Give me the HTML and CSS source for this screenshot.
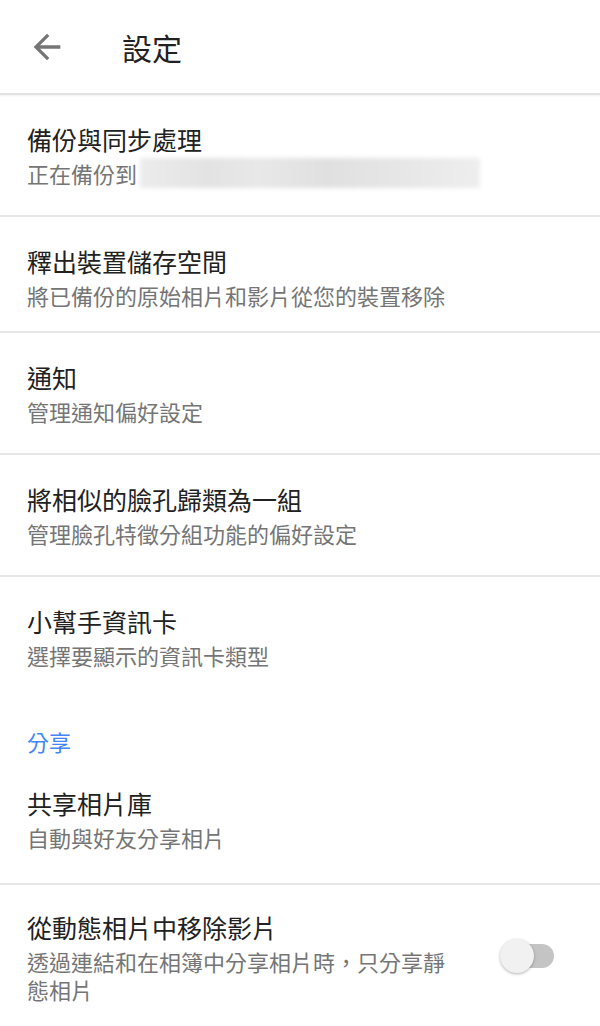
FILE: index.html
```html
<!DOCTYPE html>
<html lang="zh-Hant">
<head>
  <meta charset="UTF-8">
  <meta name="viewport" content="width=device-width, initial-scale=1.0">
  <title>設定</title>
  <link rel="stylesheet" href="styles.css">
</head>
<body>
  <header class="topbar">
    <svg class="back" viewBox="0 0 24 24" width="40" height="40">
      <path d="M20 11H7.83l5.59-5.59L12 4l-8 8 8 8 1.41-1.41L7.83 13H20v-2z" fill="#757575"/>
    </svg>
    <h1 class="topbar-title">設定</h1>
  </header>

  <div class="list">
    <div class="item first">
      <div class="item-text">
        <div class="item-title">備份與同步處理</div>
        <div class="item-sub">正在備份到<span class="blurred"></span></div>
      </div>
    </div>
    <div class="item short">
      <div class="item-text">
        <div class="item-title">釋出裝置儲存空間</div>
        <div class="item-sub">將已備份的原始相片和影片從您的裝置移除</div>
      </div>
    </div>
    <div class="item">
      <div class="item-text">
        <div class="item-title">通知</div>
        <div class="item-sub">管理通知偏好設定</div>
      </div>
    </div>
    <div class="item">
      <div class="item-text">
        <div class="item-title">將相似的臉孔歸類為一組</div>
        <div class="item-sub">管理臉孔特徵分組功能的偏好設定</div>
      </div>
    </div>
    <div class="item no-line">
      <div class="item-text">
        <div class="item-title">小幫手資訊卡</div>
        <div class="item-sub">選擇要顯示的資訊卡類型</div>
      </div>
    </div>

    <div class="section">分享</div>

    <div class="item tall">
      <div class="item-text">
        <div class="item-title">共享相片庫</div>
        <div class="item-sub">自動與好友分享相片</div>
      </div>
    </div>
    <div class="item no-line with-switch">
      <div class="item-text">
        <div class="item-title">從動態相片中移除影片</div>
        <div class="item-sub">透過連結和在相簿中分享相片時，只分享靜態相片</div>
      </div>
      <div class="switch">
        <div class="switch-track"></div>
        <div class="switch-thumb"></div>
      </div>
    </div>
  </div>
</body>
</html>
```

FILE: styles.css
```css
body {
  margin: 0;
  background: #fff;
  font-family: "Noto Sans CJK TC", "Noto Sans", sans-serif;
  color: #212121;
}
.topbar {
  display: flex;
  align-items: center;
  height: 93px;
  padding-left: 27px;
  border-bottom: 2px solid #e2e2e2;
  box-shadow: 0 1px 2px rgba(0, 0, 0, 0.06);
}
.back {
  display: block;
  flex: none;
}
.topbar-title {
  margin: 0 0 0 55px;
  font-size: 30px;
  font-weight: 400;
  line-height: 40px;
  color: #212121;
}
.item {
  display: flex;
  align-items: center;
  padding: 26px 27px 28px;
  border-bottom: 2px solid #e6e6e6;
}
.item.first {
  padding-bottom: 27px;
}
.item.short {
  padding-bottom: 22px;
}
.item.tall {
  padding-bottom: 32px;
}
.item.no-line {
  border-bottom: none;
}
.item-text {
  flex: 1;
  min-width: 0;
}
.item-title {
  margin-bottom: 2px;
  font-size: 25px;
  line-height: 36px;
  color: #212121;
}
.item-sub {
  font-size: 22px;
  line-height: 28px;
  color: #757575;
}
.blurred {
  display: inline-block;
  vertical-align: top;
  width: 340px;
  height: 30px;
  margin-top: -1px;
  margin-left: 3px;
  background: linear-gradient(90deg, #ececec 0%, #e3e3e3 20%, #e8e8e8 35%, #e0e0e0 55%, #e6e6e6 75%, #eeeeee 100%);
  filter: blur(2px);
}
.section {
  padding: 30px 27px 4px;
  font-size: 22px;
  line-height: 28px;
  color: #4285f4;
}
.with-switch {
  padding-top: 24px;
  padding-right: 46px;
}
.with-switch .item-text {
  margin-right: 40px;
}
.switch {
  position: relative;
  flex: none;
  width: 54px;
  height: 34px;
}
.switch-track {
  position: absolute;
  left: 12px;
  right: 0;
  top: 5px;
  height: 24px;
  border-radius: 12px;
  background: #c4c4c4;
}
.switch-thumb {
  position: absolute;
  left: 0;
  top: 0;
  width: 34px;
  height: 34px;
  border-radius: 50%;
  background: #f1f1f1;
  box-shadow: 0 1px 3px rgba(0, 0, 0, 0.3);
}
```
